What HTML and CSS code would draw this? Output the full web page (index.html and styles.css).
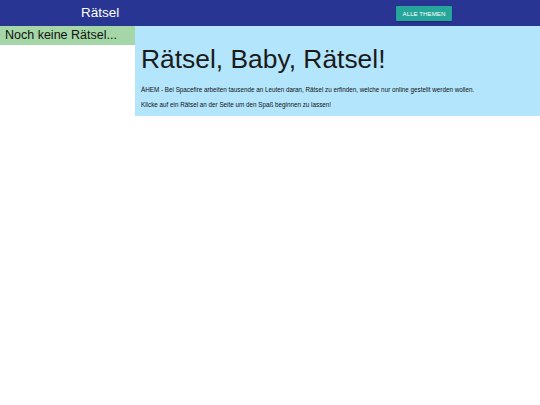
FILE: index.html
```html
<!DOCTYPE html>
<html lang="de">
<head>
<meta charset="utf-8">
<title>Rätsel</title>
<link rel="stylesheet" href="styles.css">
</head>
<body>
<header class="topbar">
  <div class="brand">Rätsel</div>
  <button class="btn">ALLE THEMEN</button>
</header>
<div class="layout">
  <aside class="sidebar">
    <div class="empty">Noch keine Rätsel...</div>
  </aside>
  <main class="intro">
    <h1 class="title">Rätsel, Baby, Rätsel!</h1>
    <p class="text">ÄHEM - Bei Spacefire arbeiten tausende an Leuten daran, Rätsel zu erfinden, welche nur online gestellt werden wollen.</p>
    <p class="text">Klicke auf ein Rätsel an der Seite um den Spaß beginnen zu lassen!</p>
  </main>
</div>
</body>
</html>
```
FILE: styles.css
```css
html, body {
  margin: 0;
  padding: 0;
  background: #ffffff;
  font-family: "Liberation Sans", Arial, sans-serif;
}

.topbar {
  height: 26px;
  background: #283593;
  display: flex;
  align-items: center;
  padding-left: 81px;
  padding-right: 88px;
}

.brand {
  color: #ffffff;
  font-size: 13.5px;
  line-height: 26px;
}

.btn {
  margin-left: auto;
  width: 56px;
  height: 15px;
  padding: 0;
  border: none;
  border-radius: 1px;
  background: #26a69a;
  color: #ffffff;
  font-family: "Liberation Sans", Arial, sans-serif;
  font-size: 6.2px;
  line-height: 15px;
  box-shadow: 0 1px 2px rgba(0,0,0,0.25);
}

.layout {
  display: grid;
  grid-template-columns: 135px 1fr;
  align-items: start;
}

.empty {
  background: #a5d6a7;
  height: 19px;
  padding-left: 5px;
  font-size: 12.5px;
  line-height: 19px;
  color: #111;
}

.intro {
  background: #b3e5fc;
  padding: 19px 6px 7px 6px;
  color: #1a1a1a;
}

.title {
  margin: 0 0 12px 0;
  font-size: 26.4px;
  font-weight: normal;
  line-height: 28px;
}

.text {
  margin: 0 0 6px 0;
  font-size: 6.3px;
  line-height: 9px;
  color: #111;
}

.text:last-child {
  margin-bottom: 0;
}
```
